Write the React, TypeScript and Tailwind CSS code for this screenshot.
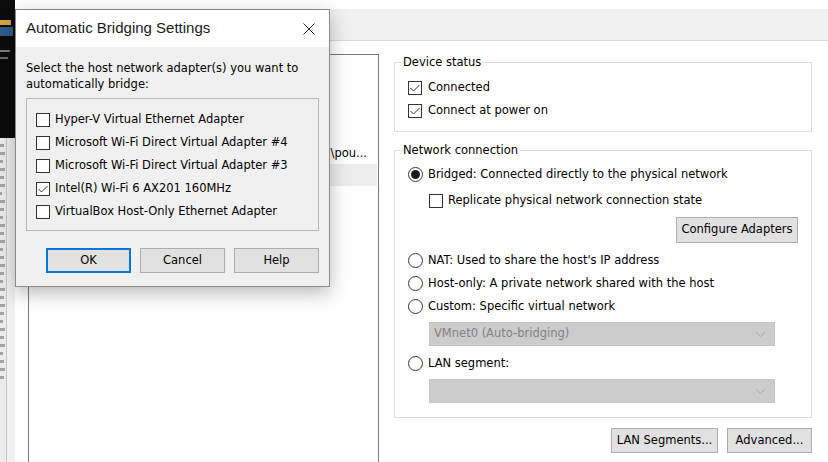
import React from 'react';

// Police proche de Tahoma pour le texte des contrôles Windows
const ui = "font-['DejaVu_Sans','Liberation_Sans',sans-serif] text-[11.5px] text-[#000]";

function CheckBox({ checked = false }: { checked?: boolean }) {
  return (
    <span className="w-[14px] h-[14px] shrink-0 border border-[#333333] bg-white flex items-center justify-center">
      {checked && (
        <svg width="12" height="12" viewBox="0 0 12 12">
          <path d="M1.5 6 L4.5 9 L10.5 3" fill="none" stroke="#333333" strokeWidth="1" />
        </svg>
      )}
    </span>
  );
}

function Radio({ checked = false }: { checked?: boolean }) {
  return (
    <span className="w-[15px] h-[15px] shrink-0 rounded-full border border-[#333333] bg-white flex items-center justify-center">
      {checked && <span className="w-[9px] h-[9px] rounded-full bg-[#1a1a1a]" />}
    </span>
  );
}

function WinButton({ label, width, primary = false }: { label: string; width: string; primary?: boolean }) {
  return (
    <button
      className={`${width} h-[25px] bg-[#e1e1e1] flex items-center justify-center ${
        primary ? 'border-2 border-[#0078d7]' : 'border border-[#adadad]'
      }`}
    >
      {label}
    </button>
  );
}

function Dropdown({ value }: { value?: string }) {
  return (
    <div className="ml-[34px] w-[346px] h-[24px] bg-[#cccccc] border border-[#c4c4c4] flex items-center justify-between pl-[4px] pr-[8px]">
      <span className="text-[#838383]">{value}</span>
      <svg width="11" height="7" viewBox="0 0 11 7">
        <path d="M1 1 L5.5 5.5 L10 1" fill="none" stroke="#a9a9a9" strokeWidth="1" />
      </svg>
    </div>
  );
}

const adapters = [
  { name: 'Hyper-V Virtual Ethernet Adapter', checked: false },
  { name: 'Microsoft Wi-Fi Direct Virtual Adapter #4', checked: false },
  { name: 'Microsoft Wi-Fi Direct Virtual Adapter #3', checked: false },
  { name: 'Intel(R) Wi-Fi 6 AX201 160MHz', checked: true },
  { name: 'VirtualBox Host-Only Ethernet Adapter', checked: false },
];

const blurRows = [4, 5, 3, 5, 4, 5, 2, 5, 4, 3, 5, 4, 5, 3, 4, 5, 4, 3, 5, 4, 5, 4, 3, 5, 4, 5, 3, 4, 5, 4];

export default function App() {
  return (
    <div className={`relative w-[828px] h-[462px] overflow-hidden bg-white flex ${ui}`}>
      {/* Bande gauche : fenêtre d'arrière-plan */}
      <div className="w-[15px] shrink-0 flex flex-col">
        <div className="h-[138px] shrink-0 bg-[#0c0c0c] flex flex-col pt-[20px] gap-[2px]">
          <div className="h-[5px] w-[11px] bg-[#d9a53a]" />
          <div className="h-[9px] w-[13px] bg-[#2c5f8a]" />
          <div className="mt-[12px] h-[2px] w-[10px] bg-[#7d7d7d]" />
          <div className="mt-[3px] h-[2px] w-[8px] bg-[#6a6a6a]" />
        </div>
        <div className="flex-1 flex">
          <div className="w-[6px] bg-[#ececec] flex flex-col gap-[5px] pt-[6px]">
            {blurRows.map((w, i) => (
              <div key={i} className="h-[3px] bg-[#a3a3a3] blur-[0.6px]" style={{ width: `${w}px` }} />
            ))}
          </div>
          <div className="w-px bg-[#c9c9c9]" />
          <div className="flex-1 bg-[#f0f0f0]" />
        </div>
      </div>

      {/* Fenêtre principale : paramètres de la machine virtuelle */}
      <div className="flex-1 flex flex-col">
        <div className="h-[9px] shrink-0 bg-white" />
        <div className="h-[32px] shrink-0 bg-[#f0f0f0] border-b border-[#dadada]" />
        <div className="flex-1 flex pl-[13px] pt-[13px]">
          {/* Liste du matériel */}
          <div className="w-[351px] h-[430px] shrink-0 border border-[#7a7a7a] bg-white pt-[88px] pr-[1px]">
            <div className="h-[21px] flex items-center justify-end pr-[10px]">
              <span>\pou...</span>
            </div>
            <div className="h-[22px] bg-[#ededed]" />
          </div>

          {/* Panneau de droite */}
          <div className="ml-[15px] w-[418px] flex flex-col">
            <fieldset className="mt-[1px] border border-[#dcdcdc]">
              <legend className="ml-[6px] px-[2px] leading-[14px]">Device status</legend>
              <div className="pl-[13px] pt-[7px] pb-[9px]">
                <div className="h-[23px] flex items-center gap-[6px]">
                  <CheckBox checked />
                  <span>Connected</span>
                </div>
                <div className="h-[23px] flex items-center gap-[6px]">
                  <CheckBox checked />
                  <span>Connect at power on</span>
                </div>
              </div>
            </fieldset>

            <fieldset className="mt-[11px] border border-[#dcdcdc]">
              <legend className="ml-[6px] px-[2px] leading-[14px]">Network connection</legend>
              <div className="pl-[13px] pt-[6px] pb-[14px] flex flex-col">
                <div className="h-[23px] flex items-center gap-[5px]">
                  <Radio checked />
                  <span>Bridged: Connected directly to the physical network</span>
                </div>
                <div className="mt-[3px] ml-[21px] h-[23px] flex items-center gap-[5px]">
                  <CheckBox />
                  <span>Replicate physical network connection state</span>
                </div>
                <div className="mt-[5px] flex justify-end pr-[13px]">
                  <button className="w-[122px] h-[26px] bg-[#e1e1e1] border border-[#adadad]">Configure Adapters</button>
                </div>
                <div className="mt-[6px] h-[23px] flex items-center gap-[5px]">
                  <Radio />
                  <span>NAT: Used to share the host's IP address</span>
                </div>
                <div className="h-[23px] flex items-center gap-[5px]">
                  <Radio />
                  <span>Host-only: A private network shared with the host</span>
                </div>
                <div className="h-[23px] flex items-center gap-[5px]">
                  <Radio />
                  <span>Custom: Specific virtual network</span>
                </div>
                <div className="mt-[4px] -ml-[13px]">
                  <Dropdown value="VMnet0 (Auto-bridging)" />
                </div>
                <div className="mt-[6px] h-[23px] flex items-center gap-[5px]">
                  <Radio />
                  <span>LAN segment:</span>
                </div>
                <div className="mt-[4px] -ml-[13px]">
                  <Dropdown />
                </div>
              </div>
            </fieldset>

            <div className="mt-[10px] flex justify-end gap-[9px]">
              <WinButton label="LAN Segments..." width="w-[107px]" />
              <WinButton label="Advanced..." width="w-[85px]" />
            </div>
          </div>
        </div>
      </div>

      {/* Boîte de dialogue superposée */}
      <div className="absolute left-[15px] top-[9px] w-[315px] h-[278px] border border-[#8a8a8a] bg-[#f0f0f0] flex flex-col shadow-[0_6px_18px_rgba(0,0,0,0.28)]">
        <div className="h-[37px] shrink-0 bg-white flex items-center justify-between pl-[10px] pr-[14px]">
          <span className="font-['Liberation_Sans',sans-serif] text-[15px] text-[#1a1a1a]">Automatic Bridging Settings</span>
          <svg width="12" height="12" viewBox="0 0 12 12">
            <path d="M0.5 0.5 L11.5 11.5 M11.5 0.5 L0.5 11.5" stroke="#222222" strokeWidth="1" />
          </svg>
        </div>
        <div className="px-[10px] pt-[13px] flex flex-col">
          <p className="leading-[16px]">
            Select the host network adapter(s) you want to
            <br />
            automatically bridge:
          </p>
          <div className="mt-[6px] h-[133px] border border-[#b9b9b9] pl-[9px] pt-[9px]">
            {adapters.map((a) => (
              <div key={a.name} className="h-[23px] flex items-center gap-[5px]">
                <CheckBox checked={a.checked} />
                <span>{a.name}</span>
              </div>
            ))}
          </div>
          <div className="mt-[17px] flex justify-end gap-[9px]">
            <WinButton label="OK" width="w-[85px]" primary />
            <WinButton label="Cancel" width="w-[85px]" />
            <WinButton label="Help" width="w-[85px]" />
          </div>
        </div>
      </div>
    </div>
  );
}
